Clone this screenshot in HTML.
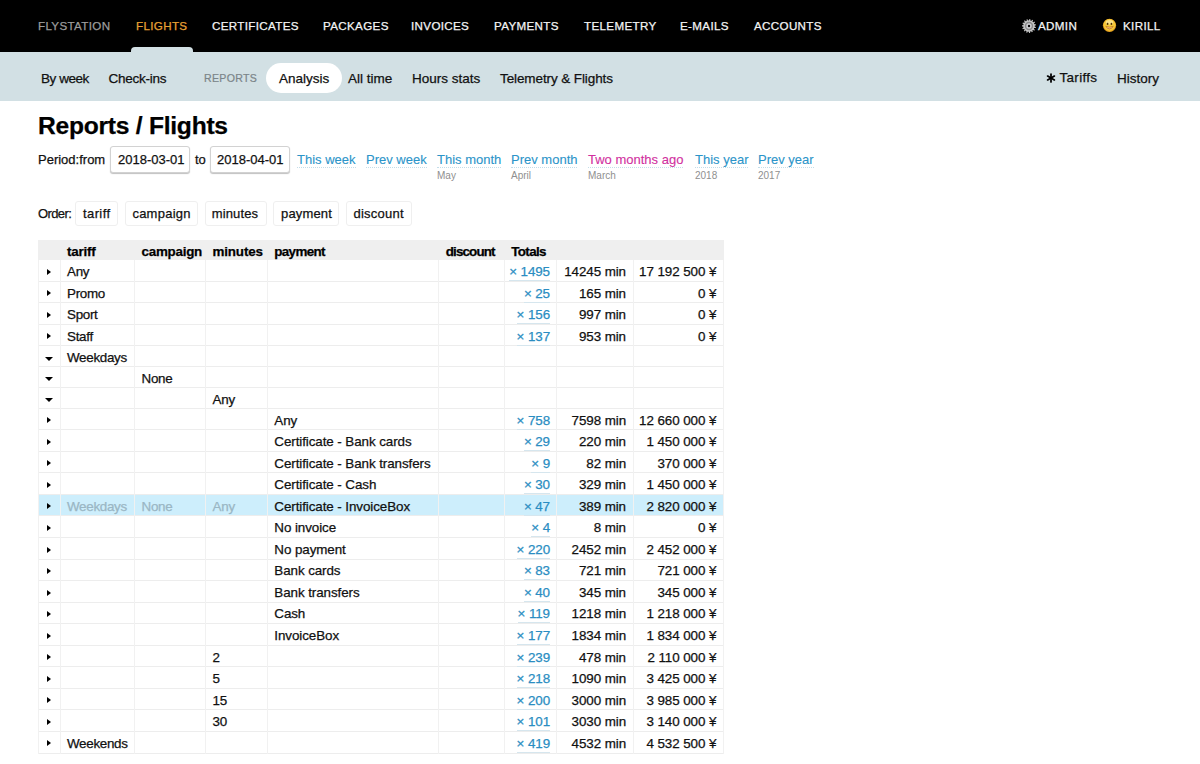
<!DOCTYPE html>
<html><head><meta charset="utf-8">
<style>
*{box-sizing:border-box}
html,body{margin:0;padding:0;background:#fff;width:1200px;height:764px;overflow:hidden}
body{font-family:"Liberation Sans",sans-serif;color:#111;position:relative;-webkit-text-stroke:0.25px}
.a{position:absolute;white-space:nowrap;line-height:1}
#nav{position:absolute;left:0;top:0;width:1200px;height:52px;background:#000}
#nav .a{font-size:11.6px;letter-spacing:0.35px;color:#f4f4f4;top:20.2px;-webkit-text-stroke:0.25px}
#sub{position:absolute;left:0;top:52px;width:1200px;height:49px;background:#d2e0e4}
#tab{position:absolute;left:131px;top:47px;width:62px;height:6px;background:#d2e0e4;border-radius:4px 4px 0 0}
#sub .a{font-size:13.5px;color:#111;top:19.8px}
#pill{position:absolute;left:266px;top:11px;width:76px;height:30px;background:#fff;border-radius:15px}
.inp{position:absolute;top:146px;height:27px;border:1px solid #d2d2d2;border-radius:3px;box-shadow:0 1px 1px rgba(0,0,0,.25);background:#fff}
.lk{color:#2b94c9;border-bottom:1px dotted #c4dde9;padding-bottom:0;-webkit-text-stroke:0.1px}
.sm{font-size:10px;color:#8f8f8f;-webkit-text-stroke:0}
.ob{position:absolute;top:200.5px;height:25px;border:1px solid #efefef;border-radius:3px}
#tbl{position:absolute;left:38px;top:240.3px;width:686px;height:514px}
#tbl .th{position:absolute;left:0;background:#efefef}
#tbl .th .c{font-weight:bold;color:#000;top:4.5px;letter-spacing:-0.65px}
#tbl .tr{position:absolute;left:0;width:685.5px;border-bottom:1px solid #ededed;box-sizing:border-box}
#tbl .hl{background:#cdeefc}
#tbl .c{position:absolute;top:4.8px;font-size:13.4px;line-height:13px;letter-spacing:-0.08px;white-space:nowrap;color:#111}
#tbl .g{color:#9ab6c4}
#tbl .x{color:#2a8dc2;border-bottom:1px solid #d6e6ee;padding-bottom:1px}
#tbl .vl{position:absolute;width:1px;background:#f1f1f1}
#tbl .rt{position:absolute;left:8.6px;top:8.5px;width:0;height:0;border-left:4.6px solid #000;border-top:3.8px solid transparent;border-bottom:3.8px solid transparent}
#tbl .dn{position:absolute;left:7.2px;top:10.2px;width:0;height:0;border-top:4.2px solid #000;border-left:4px solid transparent;border-right:4px solid transparent}
</style></head><body>
<div id="nav">
  <span class="a" style="left:38px;color:#9c9c9c">FLYSTATION</span>
  <span class="a" style="left:136px;color:#e8a034">FLIGHTS</span>
  <span class="a" style="left:212px">CERTIFICATES</span>
  <span class="a" style="left:323px">PACKAGES</span>
  <span class="a" style="left:411px">INVOICES</span>
  <span class="a" style="left:494px">PAYMENTS</span>
  <span class="a" style="left:584px">TELEMETRY</span>
  <span class="a" style="left:680px">E-MAILS</span>
  <span class="a" style="left:754px">ACCOUNTS</span>
  <svg style="position:absolute;left:1021px;top:17.7px" width="16" height="16" viewBox="0 0 16 16"><path fill="#c4c4c4" d="M8.00 2.60 L8.35 1.01 L9.40 1.14 L9.34 2.77 L10.20 3.07 L11.16 1.76 L12.07 2.30 L11.35 3.77 L12.01 4.39 L13.43 3.58 L14.03 4.45 L12.79 5.50 L13.14 6.33 L14.76 6.17 L14.96 7.21 L13.39 7.66 L13.37 8.56 L14.92 9.08 L14.68 10.11 L13.06 9.88 L12.68 10.70 L13.88 11.80 L13.24 12.64 L11.86 11.78 L11.17 12.37 L11.82 13.86 L10.90 14.37 L9.99 13.02 L9.12 13.28 L9.11 14.91 L8.06 15.00 L7.77 13.40 L6.88 13.28 L6.20 14.77 L5.21 14.42 L5.60 12.84 L4.83 12.37 L3.61 13.45 L2.84 12.73 L3.84 11.44 L3.32 10.70 L1.77 11.19 L1.36 10.22 L2.80 9.45 L2.63 8.56 L1.01 8.38 L1.03 7.33 L2.66 7.21 L2.86 6.33 L1.46 5.51 L1.91 4.55 L3.44 5.11 L3.99 4.39 L3.04 3.06 L3.84 2.37 L5.01 3.50 L5.80 3.07 L5.48 1.47 L6.49 1.17 L7.10 2.68Z"/><circle cx="8" cy="8" r="5.6" fill="#c4c4c4"/><circle cx="8" cy="8" r="4.2" fill="#8a8a8a"/><circle cx="8" cy="8" r="2.7" fill="#d0d0d4"/><circle cx="8" cy="8" r="1.2" fill="#0a0a0a"/></svg>
  <svg style="position:absolute;left:1102px;top:18.3px" width="15" height="15" viewBox="0 0 15 15"><circle cx="7.5" cy="7.3" r="6.6" fill="#e8a41f"/><circle cx="7.5" cy="6.8" r="5.9" fill="#f5c83a"/><ellipse cx="7.5" cy="4.2" rx="3.6" ry="2.2" fill="#fbe38a"/><ellipse cx="5.6" cy="5.9" rx="0.85" ry="1.05" fill="#4a2e04"/><ellipse cx="9.4" cy="5.9" rx="0.85" ry="1.05" fill="#4a2e04"/><path d="M3.7 8.4 Q7.5 13.4 11.3 8.4 Q7.5 9.8 3.7 8.4Z" fill="#f4bd7c" stroke="#b5650f" stroke-width="0.6"/></svg>
  <span class="a" style="left:1038px">ADMIN</span>
  <span class="a" style="left:1123px">KIRILL</span>
</div>
<div id="tab"></div>
<div id="sub">
  <span class="a" style="left:41px;letter-spacing:-0.45px">By week</span>
  <span class="a" style="left:108.5px;letter-spacing:-0.25px">Check-ins</span>
  <span class="a" style="left:204px;font-size:10.6px;letter-spacing:0.3px;-webkit-text-stroke:0.2px;color:#7b8589;top:20.8px">REPORTS</span>
  <div id="pill"></div>
  <span class="a" style="left:279px">Analysis</span>
  <span class="a" style="left:348px">All time</span>
  <span class="a" style="left:412px">Hours stats</span>
  <span class="a" style="left:500px;letter-spacing:-0.1px">Telemetry &amp; Flights</span>
  <svg style="position:absolute;left:1045.2px;top:19.6px" width="12" height="12" viewBox="0 0 12 12"><g stroke="#000" stroke-width="1.75" stroke-linecap="round"><line x1="6.00" y1="2.10" x2="6.00" y2="9.90"/><line x1="2.62" y1="4.05" x2="9.38" y2="7.95"/><line x1="2.62" y1="7.95" x2="9.38" y2="4.05"/></g></svg><span class="a" style="left:1059.5px;top:19px;letter-spacing:0.3px">Tariffs</span>
  <span class="a" style="left:1117px">History</span>
</div>

<span class="a" style="left:38px;top:114px;font-size:24.6px;letter-spacing:-0.25px;font-weight:bold;color:#000">Reports / Flights</span>

<span class="a" style="left:38px;top:153px;font-size:13px">Period:from</span>
<div class="inp" style="left:110px;width:80px"></div>
<span class="a" style="left:118px;top:153px;font-size:13px">2018-03-01</span>
<span class="a" style="left:195px;top:153px;font-size:13px">to</span>
<div class="inp" style="left:210px;width:80px"></div>
<span class="a" style="left:217px;top:153px;font-size:13px">2018-04-01</span>

<span class="a" style="left:297px;top:153px;font-size:13px"><span class="lk">This week</span></span>
<span class="a" style="left:366px;top:153px;font-size:13px"><span class="lk">Prev week</span></span>
<span class="a" style="left:437px;top:153px;font-size:13px"><span class="lk">This month</span></span>
<span class="a sm" style="left:437px;top:170.9px">May</span>
<span class="a" style="left:511px;top:153px;font-size:13px"><span class="lk">Prev month</span></span>
<span class="a sm" style="left:511px;top:170.9px">April</span>
<span class="a" style="left:588px;top:153px;font-size:13px"><span class="lk" style="color:#d12f9e">Two months ago</span></span>
<span class="a sm" style="left:588px;top:170.9px">March</span>
<span class="a" style="left:695px;top:153px;font-size:13px"><span class="lk">This year</span></span>
<span class="a sm" style="left:695px;top:170.9px">2018</span>
<span class="a" style="left:758px;top:153px;font-size:13px"><span class="lk">Prev year</span></span>
<span class="a sm" style="left:758px;top:170.9px">2017</span>

<span class="a" style="left:38px;top:207px;font-size:13px;letter-spacing:-0.6px">Order:</span>
<div class="ob" style="left:75px;width:43px"></div>
<span class="a" style="left:83px;top:207px;font-size:13px;letter-spacing:0.4px">tariff</span>
<div class="ob" style="left:125px;width:73px"></div>
<span class="a" style="left:132.4px;top:207px;font-size:13px;letter-spacing:0.25px">campaign</span>
<div class="ob" style="left:205px;width:62px"></div>
<span class="a" style="left:211.7px;top:207px;font-size:13px;letter-spacing:0.15px">minutes</span>
<div class="ob" style="left:273px;width:66px"></div>
<span class="a" style="left:281px;top:207px;font-size:13px;letter-spacing:0.15px">payment</span>
<div class="ob" style="left:346px;width:66px"></div>
<span class="a" style="left:353.5px;top:207px;font-size:13px;letter-spacing:0.25px">discount</span>

<!--TABLE-->
<div id="tbl">
<div class="th" style="top:0.00px;height:20.00px;width:685.50px">
<span class="c" style="left:29.00px;letter-spacing:-0.2px">tariff</span>
<span class="c" style="left:103.50px;letter-spacing:-0.25px">campaign</span>
<span class="c" style="left:174.50px;letter-spacing:-0.15px">minutes</span>
<span class="c" style="left:236.30px">payment</span>
<span class="c" style="left:407.70px;letter-spacing:-0.85px">discount</span>
<span class="c" style="left:473.30px">Totals</span>
</div>
<div class="tr" style="top:20.00px;height:21.55px">
<i class="rt"></i>
<span class="c" style="left:29.00px;letter-spacing:-0.3px">Any</span>
<span class="c n" style="right:173.50px"><span class="x">× 1495</span></span>
<span class="c n" style="right:97.50px">14245 min</span>
<span class="c n" style="right:7.20px">17 192 500 ¥</span>
</div>
<div class="tr" style="top:41.55px;height:21.55px">
<i class="rt"></i>
<span class="c" style="left:29.00px;letter-spacing:-0.3px">Promo</span>
<span class="c n" style="right:173.50px"><span class="x">× 25</span></span>
<span class="c n" style="right:97.50px">165 min</span>
<span class="c n" style="right:7.20px">0 ¥</span>
</div>
<div class="tr" style="top:63.10px;height:21.55px">
<i class="rt"></i>
<span class="c" style="left:29.00px;letter-spacing:-0.3px">Sport</span>
<span class="c n" style="right:173.50px"><span class="x">× 156</span></span>
<span class="c n" style="right:97.50px">997 min</span>
<span class="c n" style="right:7.20px">0 ¥</span>
</div>
<div class="tr" style="top:84.65px;height:21.55px">
<i class="rt"></i>
<span class="c" style="left:29.00px;letter-spacing:-0.3px">Staff</span>
<span class="c n" style="right:173.50px"><span class="x">× 137</span></span>
<span class="c n" style="right:97.50px">953 min</span>
<span class="c n" style="right:7.20px">0 ¥</span>
</div>
<div class="tr" style="top:106.20px;height:20.75px">
<i class="dn"></i>
<span class="c" style="left:29.00px;letter-spacing:-0.3px">Weekdays</span>
</div>
<div class="tr" style="top:126.95px;height:20.75px">
<i class="dn"></i>
<span class="c" style="left:103.50px;letter-spacing:-0.25px">None</span>
</div>
<div class="tr" style="top:147.70px;height:20.75px">
<i class="dn"></i>
<span class="c" style="left:174.50px;letter-spacing:-0.15px">Any</span>
</div>
<div class="tr" style="top:168.45px;height:21.55px">
<i class="rt"></i>
<span class="c" style="left:236.30px">Any</span>
<span class="c n" style="right:173.50px"><span class="x">× 758</span></span>
<span class="c n" style="right:97.50px">7598 min</span>
<span class="c n" style="right:7.20px">12 660 000 ¥</span>
</div>
<div class="tr" style="top:190.00px;height:21.55px">
<i class="rt"></i>
<span class="c" style="left:236.30px">Certificate - Bank cards</span>
<span class="c n" style="right:173.50px"><span class="x">× 29</span></span>
<span class="c n" style="right:97.50px">220 min</span>
<span class="c n" style="right:7.20px">1 450 000 ¥</span>
</div>
<div class="tr" style="top:211.55px;height:21.55px">
<i class="rt"></i>
<span class="c" style="left:236.30px">Certificate - Bank transfers</span>
<span class="c n" style="right:173.50px"><span class="x">× 9</span></span>
<span class="c n" style="right:97.50px">82 min</span>
<span class="c n" style="right:7.20px">370 000 ¥</span>
</div>
<div class="tr" style="top:233.10px;height:21.55px">
<i class="rt"></i>
<span class="c" style="left:236.30px">Certificate - Cash</span>
<span class="c n" style="right:173.50px"><span class="x">× 30</span></span>
<span class="c n" style="right:97.50px">329 min</span>
<span class="c n" style="right:7.20px">1 450 000 ¥</span>
</div>
<div class="tr hl" style="top:254.65px;height:21.55px">
<i class="rt"></i>
<span class="c g" style="left:29.00px;letter-spacing:-0.3px">Weekdays</span>
<span class="c g" style="left:103.50px;letter-spacing:-0.25px">None</span>
<span class="c g" style="left:174.50px;letter-spacing:-0.15px">Any</span>
<span class="c" style="left:236.30px">Certificate - InvoiceBox</span>
<span class="c n" style="right:173.50px"><span class="x">× 47</span></span>
<span class="c n" style="right:97.50px">389 min</span>
<span class="c n" style="right:7.20px">2 820 000 ¥</span>
</div>
<div class="tr" style="top:276.20px;height:21.55px">
<i class="rt"></i>
<span class="c" style="left:236.30px">No invoice</span>
<span class="c n" style="right:173.50px"><span class="x">× 4</span></span>
<span class="c n" style="right:97.50px">8 min</span>
<span class="c n" style="right:7.20px">0 ¥</span>
</div>
<div class="tr" style="top:297.75px;height:21.55px">
<i class="rt"></i>
<span class="c" style="left:236.30px">No payment</span>
<span class="c n" style="right:173.50px"><span class="x">× 220</span></span>
<span class="c n" style="right:97.50px">2452 min</span>
<span class="c n" style="right:7.20px">2 452 000 ¥</span>
</div>
<div class="tr" style="top:319.30px;height:21.55px">
<i class="rt"></i>
<span class="c" style="left:236.30px">Bank cards</span>
<span class="c n" style="right:173.50px"><span class="x">× 83</span></span>
<span class="c n" style="right:97.50px">721 min</span>
<span class="c n" style="right:7.20px">721 000 ¥</span>
</div>
<div class="tr" style="top:340.85px;height:21.55px">
<i class="rt"></i>
<span class="c" style="left:236.30px">Bank transfers</span>
<span class="c n" style="right:173.50px"><span class="x">× 40</span></span>
<span class="c n" style="right:97.50px">345 min</span>
<span class="c n" style="right:7.20px">345 000 ¥</span>
</div>
<div class="tr" style="top:362.40px;height:21.55px">
<i class="rt"></i>
<span class="c" style="left:236.30px">Cash</span>
<span class="c n" style="right:173.50px"><span class="x">× 119</span></span>
<span class="c n" style="right:97.50px">1218 min</span>
<span class="c n" style="right:7.20px">1 218 000 ¥</span>
</div>
<div class="tr" style="top:383.95px;height:21.55px">
<i class="rt"></i>
<span class="c" style="left:236.30px">InvoiceBox</span>
<span class="c n" style="right:173.50px"><span class="x">× 177</span></span>
<span class="c n" style="right:97.50px">1834 min</span>
<span class="c n" style="right:7.20px">1 834 000 ¥</span>
</div>
<div class="tr" style="top:405.50px;height:21.55px">
<i class="rt"></i>
<span class="c" style="left:174.50px;letter-spacing:-0.15px">2</span>
<span class="c n" style="right:173.50px"><span class="x">× 239</span></span>
<span class="c n" style="right:97.50px">478 min</span>
<span class="c n" style="right:7.20px">2 110 000 ¥</span>
</div>
<div class="tr" style="top:427.05px;height:21.55px">
<i class="rt"></i>
<span class="c" style="left:174.50px;letter-spacing:-0.15px">5</span>
<span class="c n" style="right:173.50px"><span class="x">× 218</span></span>
<span class="c n" style="right:97.50px">1090 min</span>
<span class="c n" style="right:7.20px">3 425 000 ¥</span>
</div>
<div class="tr" style="top:448.60px;height:21.55px">
<i class="rt"></i>
<span class="c" style="left:174.50px;letter-spacing:-0.15px">15</span>
<span class="c n" style="right:173.50px"><span class="x">× 200</span></span>
<span class="c n" style="right:97.50px">3000 min</span>
<span class="c n" style="right:7.20px">3 985 000 ¥</span>
</div>
<div class="tr" style="top:470.15px;height:21.55px">
<i class="rt"></i>
<span class="c" style="left:174.50px;letter-spacing:-0.15px">30</span>
<span class="c n" style="right:173.50px"><span class="x">× 101</span></span>
<span class="c n" style="right:97.50px">3030 min</span>
<span class="c n" style="right:7.20px">3 140 000 ¥</span>
</div>
<div class="tr" style="top:491.70px;height:21.55px">
<i class="rt"></i>
<span class="c" style="left:29.00px;letter-spacing:-0.3px">Weekends</span>
<span class="c n" style="right:173.50px"><span class="x">× 419</span></span>
<span class="c n" style="right:97.50px">4532 min</span>
<span class="c n" style="right:7.20px">4 532 500 ¥</span>
</div>
<div class="vl" style="left:21.50px;top:20.00px;height:493.25px"></div>
<div class="vl" style="left:96.00px;top:20.00px;height:493.25px"></div>
<div class="vl" style="left:167.00px;top:20.00px;height:493.25px"></div>
<div class="vl" style="left:228.80px;top:20.00px;height:493.25px"></div>
<div class="vl" style="left:400.20px;top:20.00px;height:493.25px"></div>
<div class="vl" style="left:465.80px;top:20.00px;height:493.25px"></div>
<div class="vl" style="left:517.50px;top:20.00px;height:493.25px"></div>
<div class="vl" style="left:595.00px;top:20.00px;height:493.25px"></div>
<div class="vl" style="left:0px;top:20.00px;height:493.25px"></div>
<div class="vl" style="left:684.50px;top:20.00px;height:493.25px"></div>
</div>
<!--/TABLE-->
</body></html>
